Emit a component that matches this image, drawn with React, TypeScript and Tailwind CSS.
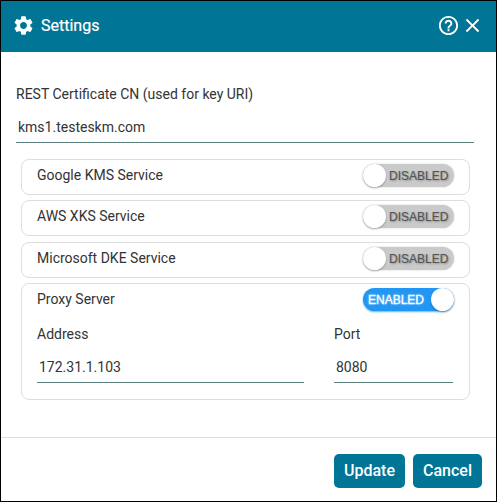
import { clsx } from "clsx";
import { MdClose, MdHelpOutline, MdSettings } from "react-icons/md";

const services = [
  { name: "Google KMS Service", spacing: "mb-[5px]" },
  { name: "AWS XKS Service", spacing: "mb-[6px]" },
  { name: "Microsoft DKE Service", spacing: "mb-[5px]" },
];

function Toggle({ enabled = false }: { enabled?: boolean }) {
  return (
    <button
      type="button"
      role="switch"
      aria-checked={enabled}
      className={clsx(
        "flex h-[23px] w-[91px] items-center rounded-full font-['Liberation_Sans',sans-serif] text-[12px] leading-none",
        enabled
          ? "flex-row-reverse bg-[#2196f3] text-white shadow-[0_1px_2px_rgba(33,150,243,0.7)]"
          : "bg-[#cacaca] text-[#555] shadow-[0_0_2px_rgba(0,0,0,0.2)]"
      )}
    >
      <span className="size-[23px] shrink-0 rounded-full bg-white shadow-[0_1px_2px_rgba(0,0,0,0.3)]" />
      <span
        className={clsx(
          "flex-1 text-left",
          enabled
            ? "pl-[5px] [-webkit-text-stroke:0.3px_currentColor] [text-shadow:0_0_3px_rgba(255,255,255,0.5)]"
            : "pt-px pl-[3px] [-webkit-text-stroke:0.15px_currentColor] [text-shadow:1px_1px_2px_rgba(0,0,0,0.3)]"
        )}
      >
        {enabled ? "ENABLED" : "DISABLED"}
      </span>
    </button>
  );
}

function Field({ label, value, className }: { label: string; value: string; className?: string }) {
  return (
    <label className={clsx("block", className)}>
      <span className="block h-4 whitespace-nowrap leading-4">{label}</span>
      <input
        defaultValue={value}
        className="mt-[9px] block h-8 w-full border-b border-[#5b7f7c] pt-px pl-[2px] outline-none"
      />
    </label>
  );
}

export default function App() {
  return (
    <div className="flex h-[502px] w-[497px] flex-col border border-black bg-white font-[Roboto,sans-serif] text-[14px] text-[#333]">
      <header className="flex h-[51px] shrink-0 items-center bg-[#007595] pr-[12px] pb-[2px] pl-[11px] text-white">
        <MdSettings className="size-[23px]" />
        <h1 className="ml-[6px] pt-px text-[16px] [-webkit-text-stroke:0.2px_currentColor]">Settings</h1>
        <button type="button" aria-label="Help" className="ml-auto">
          <MdHelpOutline className="size-[23px]" />
        </button>
        <button type="button" aria-label="Close" className="ml-px">
          <MdClose className="size-[23px]" />
        </button>
      </header>

      <main className="flex-1 pt-[34px]">
        <Field label="REST Certificate CN (used for key URI)" value="kms1.testeskm.com" className="mr-[22px] ml-[15px]" />

        <div className="mt-4 mr-[26px] ml-5">
          {services.map((service) => (
            <section
              key={service.name}
              className={clsx(
                "flex h-9 items-center justify-between rounded-lg border border-[#ddd] pr-[15px] pb-1 pl-[15px]",
                service.spacing
              )}
            >
              <span>{service.name}</span>
              <Toggle />
            </section>
          ))}
          <section className="h-[117px] rounded-lg border border-[#ddd] pt-1 pr-[15px] pl-[15px]">
            <div className="flex items-start justify-between">
              <span className="pt-px">Proxy Server</span>
              <Toggle enabled />
            </div>
            <div className="mt-[15px] flex gap-[30px]">
              <Field label="Address" value="172.31.1.103" className="w-[267px] shrink-0" />
              <Field label="Port" value="8080" className="w-[119px] shrink-0" />
            </div>
          </section>
        </div>
      </main>

      <footer className="flex h-16 shrink-0 justify-end gap-2 border-t border-[#ddd] pt-4 pr-[14px]">
        <button type="button" className="h-[34px] w-[71px] rounded-[5px] bg-[#007595] text-[16px] font-medium text-white">
          Update
        </button>
        <button type="button" className="h-[34px] w-[69px] rounded-[5px] bg-[#007595] text-[16px] font-medium text-white">
          Cancel
        </button>
      </footer>
    </div>
  );
}
